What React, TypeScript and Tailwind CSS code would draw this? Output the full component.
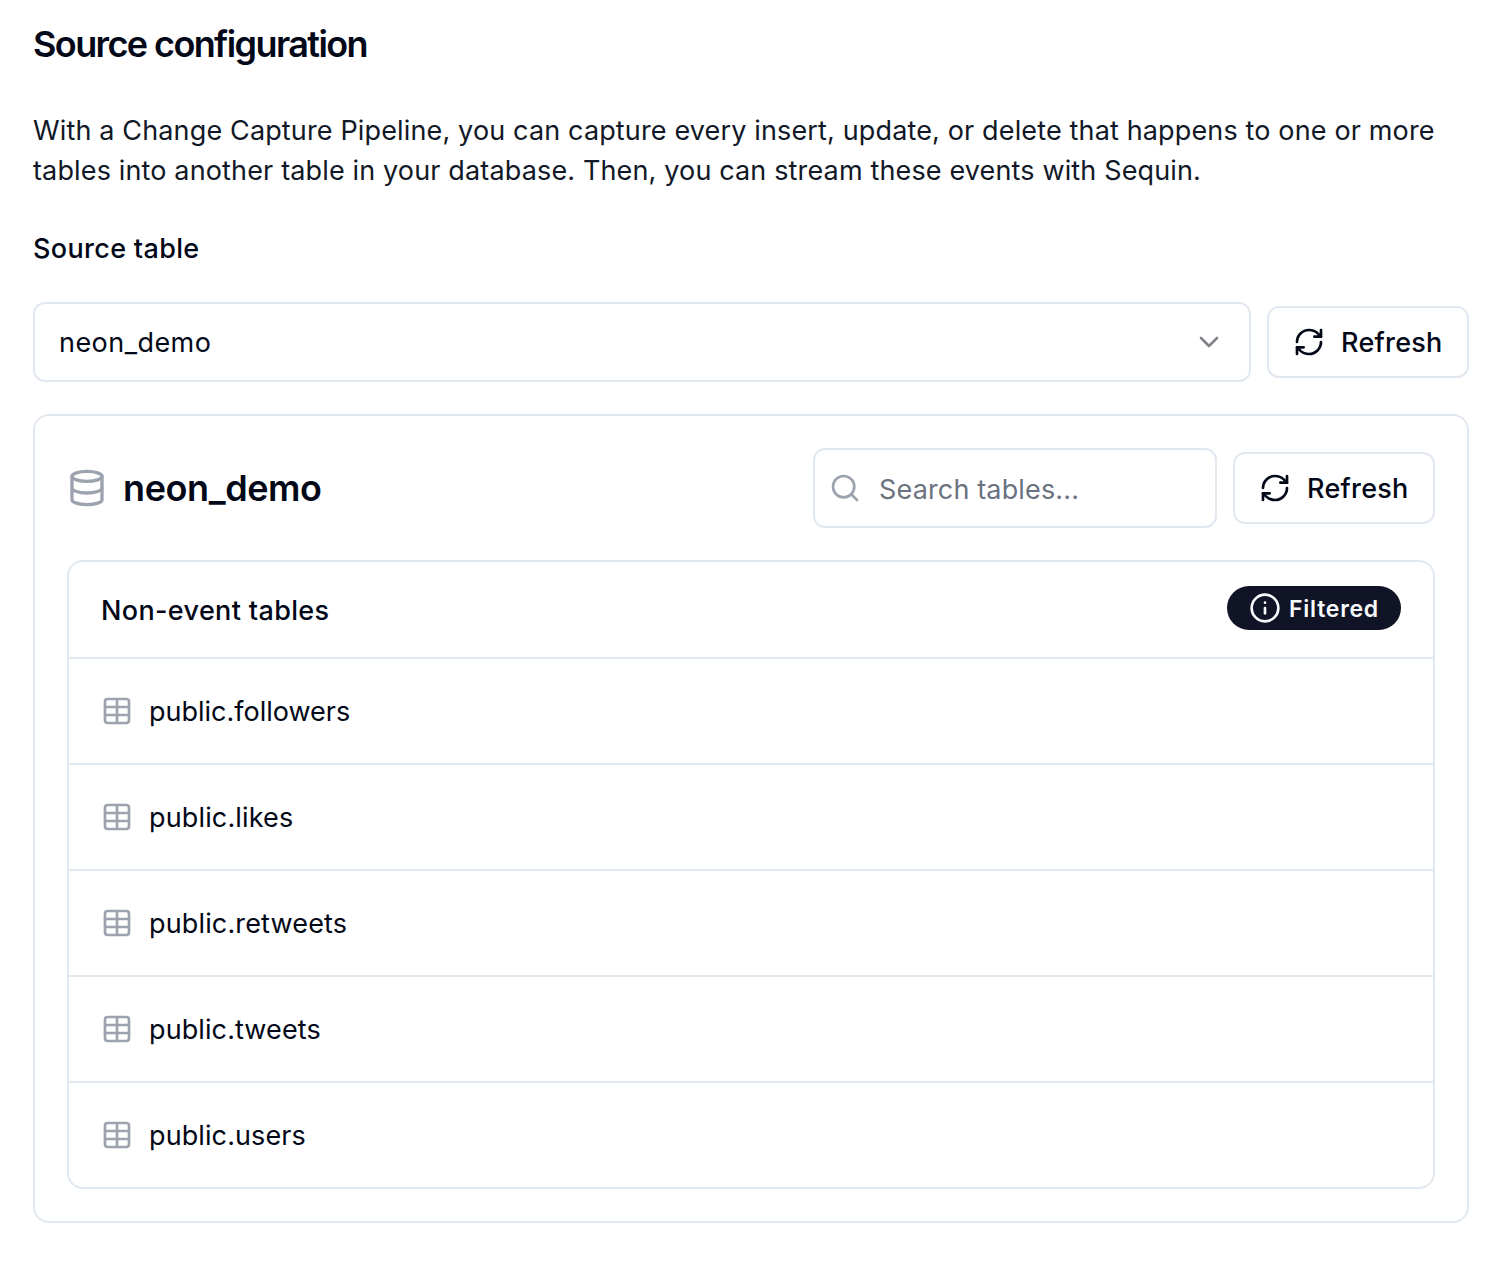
import { ChevronDown, Database, Info, RefreshCw, Search, Table } from "lucide-react";

const tables = [
  { name: "public.followers", tracking: "tracking-normal" },
  { name: "public.likes", tracking: "tracking-[0.15px]" },
  { name: "public.retweets", tracking: "tracking-[0.15px]" },
  { name: "public.tweets", tracking: "tracking-[0.1px]" },
  { name: "public.users", tracking: "tracking-[0.1px]" },
];

function RefreshButton() {
  return (
    <button className="flex h-[72px] w-[202px] shrink-0 items-center rounded-xl border-2 border-[#e2e8f0] pl-[24px] text-[27px] font-medium tracking-[0.25px] whitespace-nowrap">
      <RefreshCw className="mr-[16px] size-8 shrink-0" strokeWidth={2} />
      <span className="pt-0.5">Refresh</span>
    </button>
  );
}

export default function App() {
  return (
    <main className="h-[1274px] w-[1502px] overflow-hidden bg-white px-[33px] pt-[24px] font-['Inter',sans-serif] text-[#020817]">
      <h1 className="text-[36px] leading-[40px] font-semibold tracking-[-1.6px] whitespace-nowrap">Source configuration</h1>
      <p className="mt-[47px] text-[27px] leading-[40px] tracking-[0.145px] whitespace-nowrap text-[#111827]">
        With a Change Capture Pipeline, you can capture every insert, update, or delete that happens to one or more
        <br />
        tables into another table in your database. Then, you can stream these events with Sequin.
      </p>
      <h2 className="mt-[38px] text-[27px] leading-[40px] font-medium tracking-[0.33px]">Source table</h2>
      <div className="mt-[33px] flex items-center gap-4">
        <div className="flex h-20 w-[1218px] items-center justify-between rounded-xl border-2 border-[#e2e8f0] pr-6 pl-6 text-[27px] tracking-[0.45px]">
          <span className="pt-0.5">neon_demo</span>
          <ChevronDown className="size-8 text-[#808389]" />
        </div>
        <RefreshButton />
      </div>
      <section className="mt-8 h-[809px] w-[1436px] rounded-2xl border-2 border-[#e2e8f0] p-8">
        <div className="flex h-20 items-center">
          <Database className="mr-4 size-10 text-[#9ca3af]" />
          <h2 className="text-[36px] font-semibold tracking-[-0.4px]">neon_demo</h2>
          <div className="mr-4 ml-auto flex h-20 w-[404px] items-center rounded-xl border-2 border-[#e2e8f0] pl-[14px] text-[27px] tracking-[0.15px] text-[#6b7280]">
            <Search className="mr-[18px] size-8 text-[#9ca3af]" />
            <span className="pt-1">Search tables...</span>
          </div>
          <RefreshButton />
        </div>
        <div className="mt-8 h-[629px] rounded-2xl border-2 border-[#e2e8f0]">
          <div className="flex h-[95px] items-center justify-between px-8">
            <h3 className="pt-[3px] text-[27px] font-medium tracking-[0.35px]">Non-event tables</h3>
            <span className="mb-[3px] flex h-11 w-[174px] items-center rounded-full bg-[#111427] pl-[22px] text-[23px] font-semibold tracking-[0.75px] text-[#f8fafc]">
              <Info className="mr-2 size-8" />
              <span className="pt-0.5">Filtered</span>
            </span>
          </div>
          {tables.map(({ name, tracking }) => (
            <div key={name} className="flex h-[106px] items-center border-t-2 border-[#e2e8f0] px-8 text-[27px]">
              <Table className="mr-4 size-8 text-[#9ca3af]" />
              <span className={`pt-0.5 ${tracking}`}>{name}</span>
            </div>
          ))}
        </div>
      </section>
    </main>
  );
}
